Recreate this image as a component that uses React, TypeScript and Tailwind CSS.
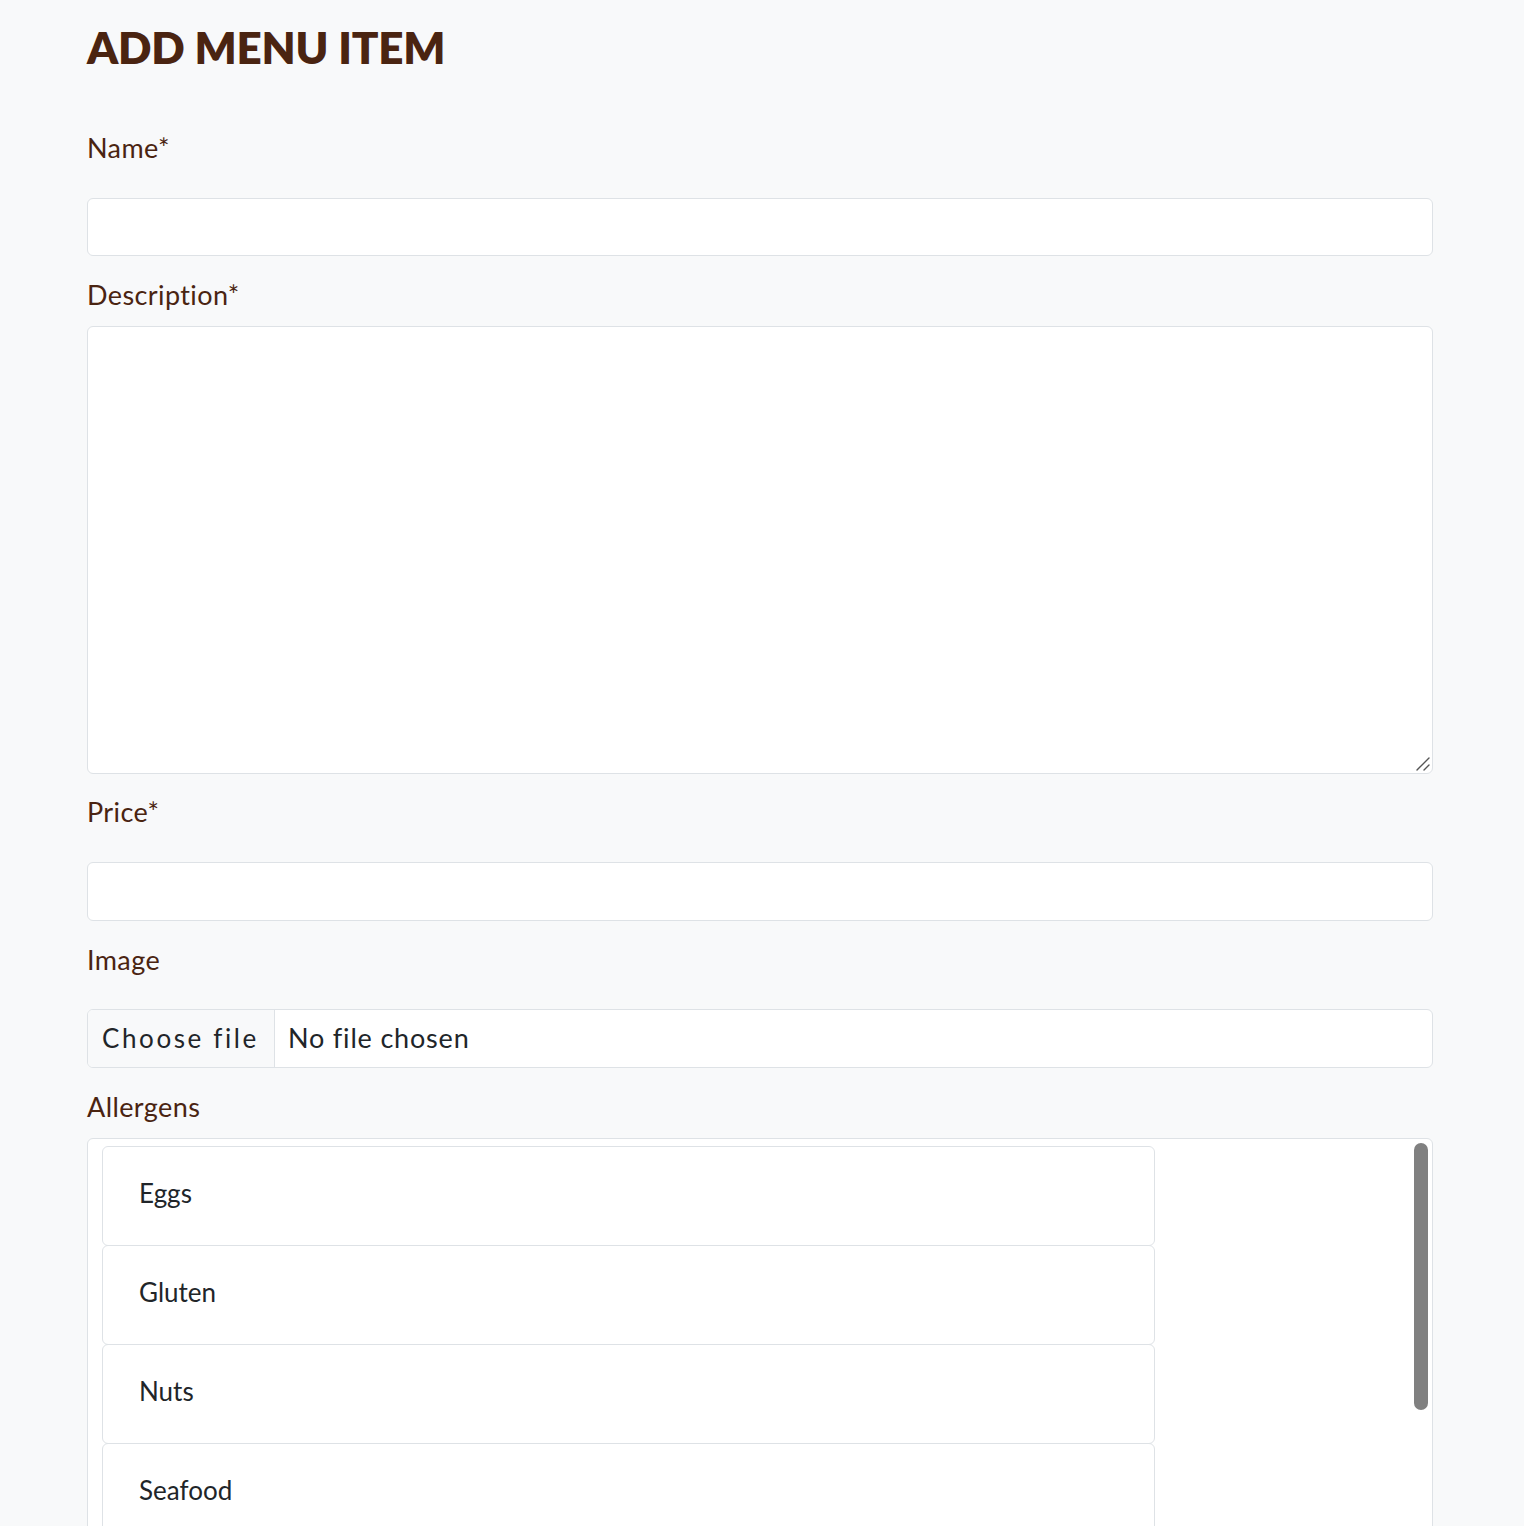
import React from "react";

const allergens = ["Eggs", "Gluten", "Nuts", "Seafood"];

export default function App() {
  return (
    <div
      className="h-[1526px] overflow-hidden bg-[#f8f9fa] text-[#212529]"
      style={{ fontFamily: "Lato, 'Noto Sans', sans-serif" }}
    >
      <div className="ml-[87px] w-[1346px] pt-[16px]">
        {/* Heading */}
        <h1 className="h-[62px] text-[44px] leading-[62px] font-extrabold tracking-[-0.005em] text-[#4a2411] uppercase">
          Add Menu Item
        </h1>

        {/* Name */}
        <label className="mt-[51px] block pb-[2px] text-[27px] leading-[37px] tracking-[0.015em] text-[#4a2411]">Name*</label>
        <input
          type="text"
          className="mt-[30px] block h-[58px] w-full rounded-md border border-[#dee2e6] bg-white px-3 outline-none"
        />

        {/* Description */}
        <label className="mt-[20px] block pb-[2px] text-[27px] leading-[37px] tracking-[0.015em] text-[#4a2411]">Description*</label>
        <div className="relative mt-[11px]">
          <textarea className="block h-[448px] w-full resize-none rounded-md border border-[#dee2e6] bg-white px-3 outline-none" />
          <svg className="absolute bottom-[2px] right-[2px]" width="16" height="16" viewBox="0 0 16 16">
            <path d="M2 14 L14 2 M9 14 L14 9" stroke="#555" strokeWidth="1.4" strokeLinecap="round" />
          </svg>
        </div>

        {/* Price */}
        <label className="mt-[19px] block pb-[2px] text-[27px] leading-[37px] tracking-[0.015em] text-[#4a2411]">Price*</label>
        <input
          type="text"
          className="mt-[30px] block h-[59px] w-full rounded-md border border-[#dee2e6] bg-white px-3 outline-none"
        />

        {/* Image */}
        <label className="mt-[20px] block pb-[2px] text-[27px] leading-[37px] tracking-[0.015em] text-[#4a2411]">Image</label>
        <div className="mt-[29px] flex h-[59px] w-full overflow-hidden rounded-md border border-[#dee2e6] bg-white">
          <div className="flex w-[187px] items-center border-r border-[#dee2e6] bg-[#f8f9fa] pl-[14px] text-[26px] tracking-[0.1em] text-[#212529]">
            Choose file
          </div>
          <div className="flex items-center pl-[13px] text-[27px] tracking-[0.03em] text-[#212529]">No file chosen</div>
        </div>

        {/* Allergens */}
        <label className="mt-[20px] block pb-[2px] text-[27px] leading-[37px] tracking-[0.015em] text-[#4a2411]">Allergens</label>
        <div className="relative mt-[11px] h-[420px] w-full overflow-hidden rounded-md border border-[#dee2e6] bg-white px-[14px] pt-[7px]">
          <div className="flex w-[1053px] flex-col">
            {allergens.map((a, i) => (
              <div
                key={a}
                className={`flex h-[100px] shrink-0 items-center rounded-md border border-[#dee2e6] bg-white pb-[5px] pl-[36px] text-[26px] text-[#212529] ${i > 0 ? "-mt-px" : ""}`}
              >
                {a}
              </div>
            ))}
          </div>
          <div className="absolute right-[4px] top-[4px] h-[267px] w-[14px] rounded-full bg-[#808080]" />
        </div>
      </div>
    </div>
  );
}
